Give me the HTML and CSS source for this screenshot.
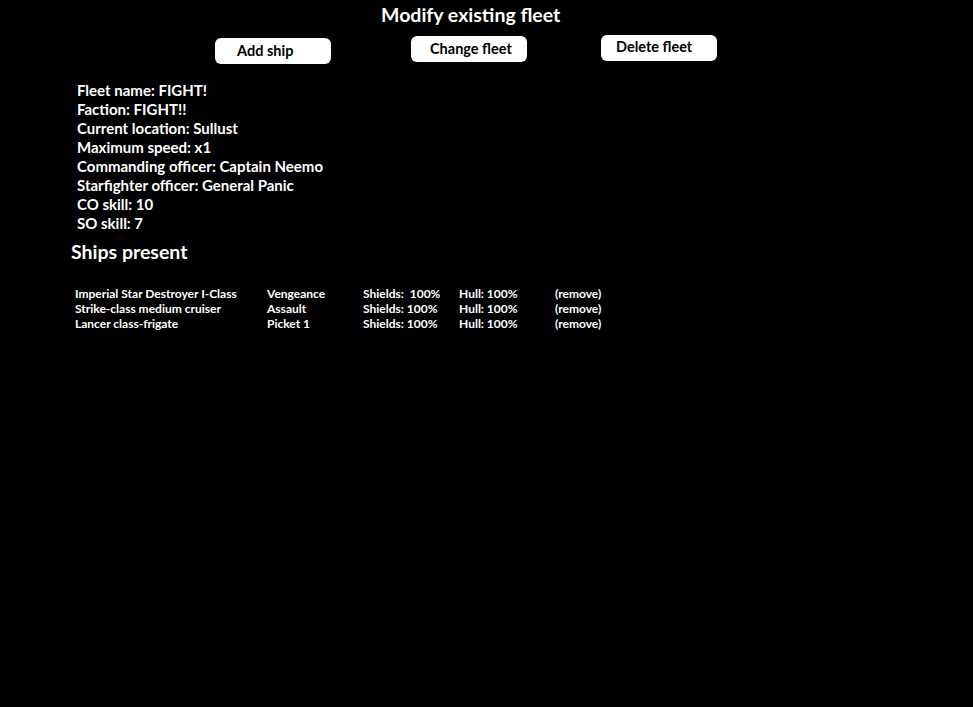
FILE: index.html
```html
<!DOCTYPE html>
<html>
<head>
<meta charset="utf-8">
<link rel="stylesheet" href="styles.css">
</head>
<body>
<div class="page">
  <h1 class="title">Modify existing fleet</h1>
  <div class="buttons">
    <div class="btn btn-add">Add ship</div>
    <div class="btn btn-change">Change fleet</div>
    <div class="btn btn-delete">Delete fleet</div>
  </div>
  <div class="info">
    <div class="line">Fleet name: FIGHT!</div>
    <div class="line">Faction: FIGHT!!</div>
    <div class="line">Current location: Sullust</div>
    <div class="line">Maximum speed: x1</div>
    <div class="line">Commanding officer: Captain Neemo</div>
    <div class="line">Starfighter officer: General Panic</div>
    <div class="line">CO skill: 10</div>
    <div class="line">SO skill: 7</div>
  </div>
  <h2 class="subtitle">Ships present</h2>
  <div class="ships">
    <div class="row">
      <span class="c1">Imperial Star Destroyer I-Class</span>
      <span class="c2">Vengeance</span>
      <span class="c3">Shields:&nbsp; 100%</span>
      <span class="c4">Hull: 100%</span>
      <span class="c5">(remove)</span>
    </div>
    <div class="row">
      <span class="c1">Strike-class medium cruiser</span>
      <span class="c2">Assault</span>
      <span class="c3">Shields: 100%</span>
      <span class="c4">Hull: 100%</span>
      <span class="c5">(remove)</span>
    </div>
    <div class="row">
      <span class="c1">Lancer class-frigate</span>
      <span class="c2">Picket 1</span>
      <span class="c3">Shields: 100%</span>
      <span class="c4">Hull: 100%</span>
      <span class="c5">(remove)</span>
    </div>
  </div>
</div>
</body>
</html>
```
FILE: styles.css
```css
html, body {
  margin: 0;
  padding: 0;
  background: #000;
  color: #fff;
  font-family: Lato, "Open Sans", sans-serif;
}
.page {
  width: 973px;
  height: 707px;
  overflow: hidden;
}
.title {
  margin: 0;
  padding: 3px 0 0 381px;
  font-size: 19.5px;
  font-weight: 700;
  line-height: 24px;
}
.buttons {
  display: flex;
  align-items: flex-start;
  padding: 1px 0 0 215px;
  height: 40px;
}
.btn {
  width: 116px;
  height: 26px;
  background: #fff;
  color: #000;
  border-radius: 6px;
  font-size: 14.5px;
  font-weight: 700;
  line-height: 26px;
  box-sizing: border-box;
}
.btn-add {
  margin-top: 10px;
  padding-left: 22px;
}
.btn-change {
  margin-top: 8px;
  margin-left: 80px;
  padding-left: 19px;
}
.btn-delete {
  margin-top: 7px;
  margin-left: 74px;
  padding-left: 15px;
  line-height: 24px;
}
.info {
  padding-left: 77px;
  margin-top: 13px;
}
.line {
  font-size: 15px;
  font-weight: 700;
  line-height: 19px;
}
.subtitle {
  margin: 7px 0 0 0;
  padding-left: 71px;
  font-size: 19.5px;
  font-weight: 700;
  line-height: 24px;
}
.ships {
  margin-top: 22px;
  padding-left: 75px;
}
.row {
  display: flex;
  font-size: 12px;
  font-weight: 700;
  line-height: 15px;
}
.c1 { width: 192px; }
.c2, .c3, .c4 { width: 96px; }
.c5 { width: 96px; }
```
